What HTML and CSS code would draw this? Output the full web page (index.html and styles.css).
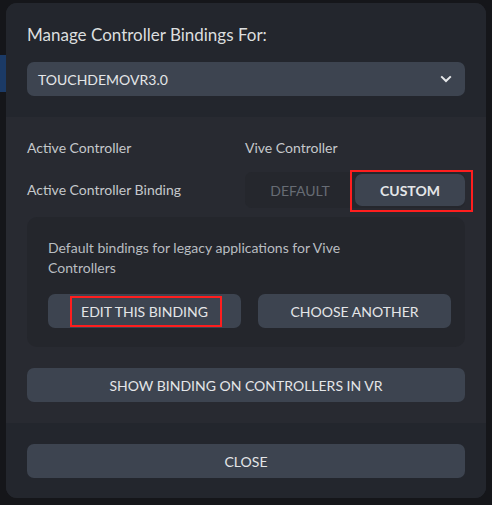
FILE: index.html
```html
<!DOCTYPE html>
<html>
<head>
<meta charset="utf-8">
<link rel="stylesheet" href="styles.css">
</head>
<body>
<div class="backdrop">
  <div class="edge-blue"></div>
  <div class="dialog">
    <div class="header">
      <div class="title">Manage Controller Bindings For:</div>
      <div class="dropdown">
        <span>TOUCHDEMOVR3.0</span>
        <svg class="chev" width="12" height="8" viewBox="0 0 12 8"><path d="M1.2 1.4 L6 6 L10.8 1.4" fill="none" stroke="#e6e8ea" stroke-width="2"/></svg>
      </div>
    </div>
    <div class="middle">
      <div class="row row1">
        <div class="label">Active Controller</div>
        <div class="value">Vive Controller</div>
      </div>
      <div class="row row2">
        <div class="label">Active Controller Binding</div>
        <div class="segmented">
          <div class="seg seg-off">DEFAULT</div>
          <div class="seg seg-on">CUSTOM</div>
          <div class="mark mark-custom"></div>
        </div>
      </div>
      <div class="infobox">
        <div class="desc">Default bindings for legacy applications for Vive Controllers</div>
        <div class="btnrow">
          <div class="btn half">EDIT THIS BINDING<div class="mark mark-edit"></div></div>
          <div class="btn half">CHOOSE ANOTHER</div>
        </div>
      </div>
      <div class="btn wide">SHOW BINDING ON CONTROLLERS IN VR</div>
    </div>
    <div class="footer">
      <div class="btn wide">CLOSE</div>
    </div>
  </div>
</div>
</body>
</html>
```

FILE: styles.css
```css
html, body {
  margin: 0;
  padding: 0;
  background: #15161a;
}
body {
  width: 492px;
  height: 505px;
  overflow: hidden;
  font-family: Lato, "Open Sans", sans-serif;
  font-size: 14px;
}
.backdrop {
  position: relative;
  padding: 3px 6px 7px 6px;
}
.edge-blue {
  position: absolute;
  left: 0;
  top: 55px;
  width: 6px;
  height: 37px;
  background: #1b3a66;
}
.dialog {
  position: relative;
  width: 480px;
  height: 495px;
  border-radius: 11px;
  overflow: hidden;
  background: #23262d;
  display: flex;
  flex-direction: column;
}
.header {
  padding: 20px 21px 21px 21px;
  background: #23262d;
}
.title {
  color: #dcdedf;
  font-size: 17px;
  line-height: 24px;
  height: 24px;
}
.dropdown {
  margin-top: 15px;
  height: 34px;
  background: #3d4450;
  border-radius: 7px;
  display: flex;
  align-items: center;
  justify-content: space-between;
  padding: 0 13px 0 11px;
  color: #e4e6e8;
  font-size: 14px;
}
.chev { display: block; }
.middle {
  background: #282a31;
  padding: 21px 21px 21px 21px;
}
.row {
  display: grid;
  grid-template-columns: 218px 220px;
  align-items: center;
}
.row1 { height: 20px; }
.row2 { margin-top: 14px; height: 36px; }
.label, .value {
  color: #c5c8cb;
  font-size: 14px;
  line-height: 20px;
}
.segmented {
  position: relative;
  display: flex;
  height: 36px;
  padding: 2px 0;
  box-sizing: border-box;
  background: #25272d;
  border-radius: 7px;
}
.seg {
  width: 110px;
  display: flex;
  align-items: center;
  justify-content: center;
  font-size: 14px;
  border-radius: 7px;
}
.seg-off { color: #676c74; }
.seg-on { background: #3d4450; color: #e4e6e8; font-weight: bold; }
.mark {
  position: absolute;
  border: 2px solid #ff1e1e;
  box-sizing: border-box;
  pointer-events: none;
}
.mark-custom {
  left: 105px;
  top: -2px;
  width: 123px;
  height: 42px;
}
.infobox {
  margin-top: 9px;
  background: #24262c;
  border-radius: 10px;
  padding: 21px 14px 19px 21px;
}
.desc {
  color: #b9bdc1;
  font-size: 14px;
  line-height: 20px;
  max-width: 330px;
}
.btnrow {
  margin-top: 16px;
  display: flex;
  gap: 17px;
}
.btn {
  position: relative;
  height: 34px;
  background: #3d4450;
  border-radius: 7px;
  display: flex;
  align-items: center;
  justify-content: center;
  color: #e4e6e8;
  font-size: 14px;
}
.half { width: 193px; }
.mark-edit {
  left: 22px;
  top: 2px;
  width: 152px;
  height: 31px;
}
.middle > .wide { margin-top: 21px; }
.footer {
  flex: 1;
  background: #23262d;
  padding: 21px 21px 20px 21px;
}
```
